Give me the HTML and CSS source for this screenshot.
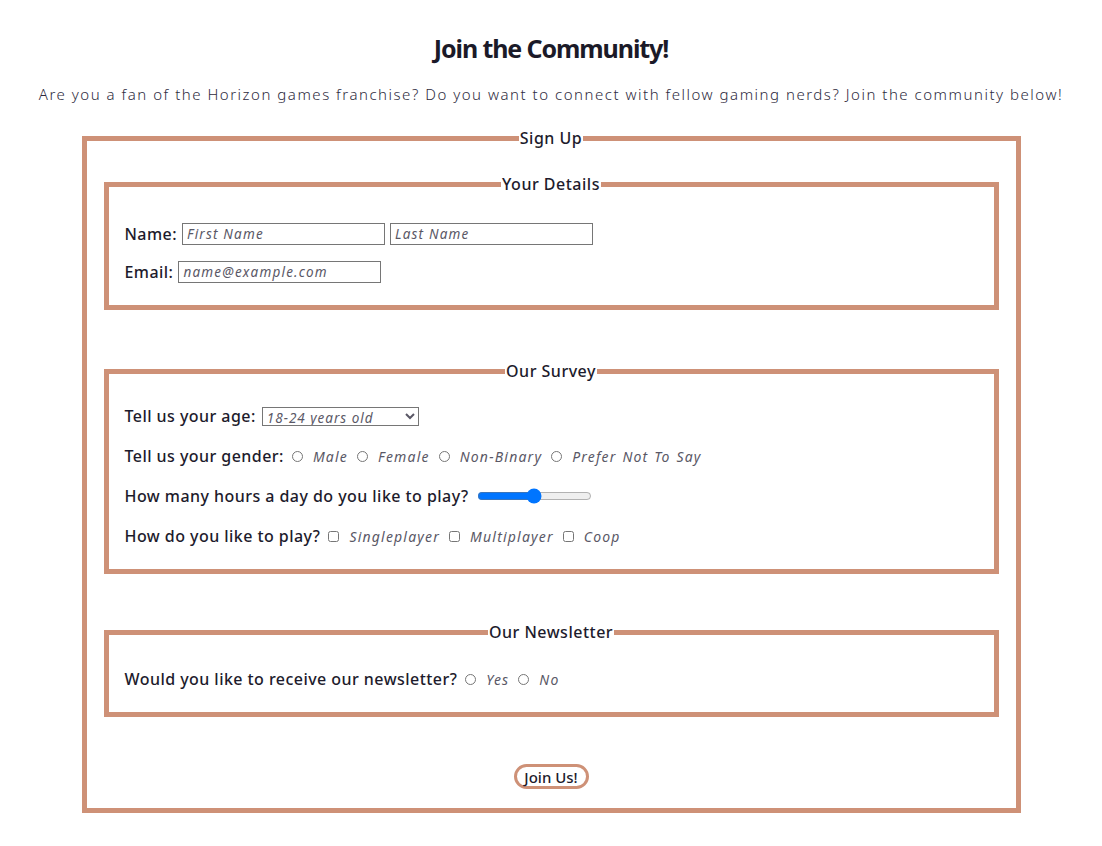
FILE: index.html
```html
<!DOCTYPE html>
<html lang="en">
<head>
<meta charset="utf-8">
<title>Join the Community!</title>
<link rel="stylesheet" href="styles.css">
</head>
<body>
  <h1 class="title">Join the Community!</h1>
  <p class="intro">Are you a fan of the Horizon games franchise? Do you want to connect with fellow gaming nerds? Join the community below!</p>
  <form class="signup">
    <fieldset class="outer">
      <legend class="legend">Sign Up</legend>

      <fieldset class="group group-details">
        <legend class="legend">Your Details</legend>
        <div class="rows rows-tight">
          <div class="row">
            <label class="lbl" for="first">Name:</label>
            <input class="text" id="first" type="text" placeholder="First Name">
            <input class="text" id="last" type="text" placeholder="Last Name">
          </div>
          <div class="row">
            <label class="lbl" for="email">Email:</label>
            <input class="text" id="email" type="email" placeholder="name@example.com">
          </div>
        </div>
      </fieldset>

      <fieldset class="group group-survey">
        <legend class="legend">Our Survey</legend>
        <div class="rows">
          <div class="row">
            <label class="lbl" for="age">Tell us your age:</label>
            <select class="select" id="age">
              <option>18-24 years old</option>
              <option>Under 18</option>
              <option>25-34 years old</option>
              <option>35+ years old</option>
            </select>
          </div>
          <div class="row">
            <span class="lbl">Tell us your gender:</span>
            <span class="opts">
              <input class="radio" type="radio" name="g" id="g1"><label class="opt" for="g1">Male</label>
              <input class="radio" type="radio" name="g" id="g2"><label class="opt" for="g2">Female</label>
              <input class="radio" type="radio" name="g" id="g3"><label class="opt" for="g3">Non-Binary</label>
              <input class="radio" type="radio" name="g" id="g4"><label class="opt" for="g4">Prefer Not To Say</label>
            </span>
          </div>
          <div class="row">
            <label class="lbl" for="hours">How many hours a day do you like to play?</label>
            <input class="range" id="hours" type="range" min="0" max="10" value="5">
          </div>
          <div class="row">
            <span class="lbl">How do you like to play?</span>
            <span class="opts">
              <input class="check" type="checkbox" id="p1"><label class="opt" for="p1">Singleplayer</label>
              <input class="check" type="checkbox" id="p2"><label class="opt" for="p2">Multiplayer</label>
              <input class="check" type="checkbox" id="p3"><label class="opt" for="p3">Coop</label>
            </span>
          </div>
        </div>
      </fieldset>

      <fieldset class="group group-news">
        <legend class="legend">Our Newsletter</legend>
        <div class="rows">
          <div class="row">
            <span class="lbl">Would you like to receive our newsletter?</span>
            <span class="opts">
              <input class="radio" type="radio" name="n" id="n1"><label class="opt" for="n1">Yes</label>
              <input class="radio" type="radio" name="n" id="n2"><label class="opt" for="n2">No</label>
            </span>
          </div>
        </div>
      </fieldset>

      <div class="actions">
        <button class="btn" type="submit">Join Us!</button>
      </div>
    </fieldset>
  </form>
</body>
</html>
```
FILE: styles.css
```css
html, body {
  margin: 0;
  padding: 0;
  background: #ffffff;
}

body {
  font-family: "Noto Sans", "DejaVu Sans", sans-serif;
  color: #1d1b2c;
  padding-top: 30px;
  padding-bottom: 32px;
}

.title {
  font-family: "Noto Sans", sans-serif;
  font-weight: 700;
  font-size: 25px;
  line-height: 36px;
  margin: 0 0 18px;
  text-align: center;
  letter-spacing: -1.1px;
  color: #1b1a28;
}

.intro {
  margin: 0 0 25px;
  text-align: center;
  font-size: 15px;
  line-height: 20px;
  letter-spacing: 1.52px;
  font-weight: 300;
  color: #2e2b3e;
}

.signup {
  margin: 0;
}

.outer {
  box-sizing: border-box;
  width: 939px;
  margin: 0 auto;
  border: 5px solid #ce9177;
  padding: 27px 17px 19px;
  min-width: 0;
}

.legend {
  font-size: 16px;
  line-height: 19px;
  font-weight: 500;
  letter-spacing: 0.5px;
  padding: 0 1px;
  margin: 0 auto;
  color: #1d1b2c;
}

.group {
  margin: 0 0 52px;
  border: 5px solid #ce9177;
  padding: 24px 16px 22px;
  min-width: 0;
}

.group-details {
  padding-top: 29px;
}

.group-survey {
  margin-bottom: 49px;
}

.group-news {
  padding-top: 26px;
}

.rows {
  display: flex;
  flex-direction: column;
  gap: 18px;
}

.rows-tight {
  gap: 16px;
}

.row {
  display: flex;
  align-items: center;
  min-height: 22px;
  gap: 5px;
}

.lbl {
  font-size: 16px;
  font-weight: 500;
  letter-spacing: 0.45px;
  color: #1d1b2c;
}

.text {
  box-sizing: border-box;
  width: 203px;
  height: 22px;
  margin: 0;
  border: 1px solid #767676;
  padding: 1px 4px;
  font-family: inherit;
  font-size: 13.5px;
  font-style: italic;
  font-weight: 400;
  letter-spacing: 1.2px;
}

.text::placeholder {
  color: #5a5866;
  font-style: italic;
}

.select {
  width: 157px;
  height: 19px;
  margin: 0 0 0 1px;
  font-family: inherit;
  font-size: 13.5px;
  font-style: italic;
  font-weight: 400;
  letter-spacing: 1px;
  color: #5a5866;
  border: 1px solid #767676;
  border-radius: 0;
  background: #fff;
}

.opts {
  display: flex;
  align-items: center;
  margin-left: 3px;
}

.radio, .check {
  margin: 0 10px 0 0;
  width: 11px;
  height: 11px;
}

.opt {
  font-size: 14px;
  font-style: italic;
  font-weight: 400;
  color: #5a5866;
  letter-spacing: 1.2px;
  word-spacing: 1px;
  margin: 0 9px 0 0;
}

.range {
  width: 115px;
  margin: 0 0 0 3px;
}

.actions {
  display: flex;
  justify-content: center;
  margin-top: -5px;
}

.btn {
  box-sizing: border-box;
  width: 75px;
  height: 25px;
  border: 3px solid #ce9177;
  border-radius: 13px;
  background: #fff;
  font-family: inherit;
  font-size: 15px;
  font-weight: 500;
  color: #1d1b2c;
  padding: 0;
  cursor: pointer;
}
```
